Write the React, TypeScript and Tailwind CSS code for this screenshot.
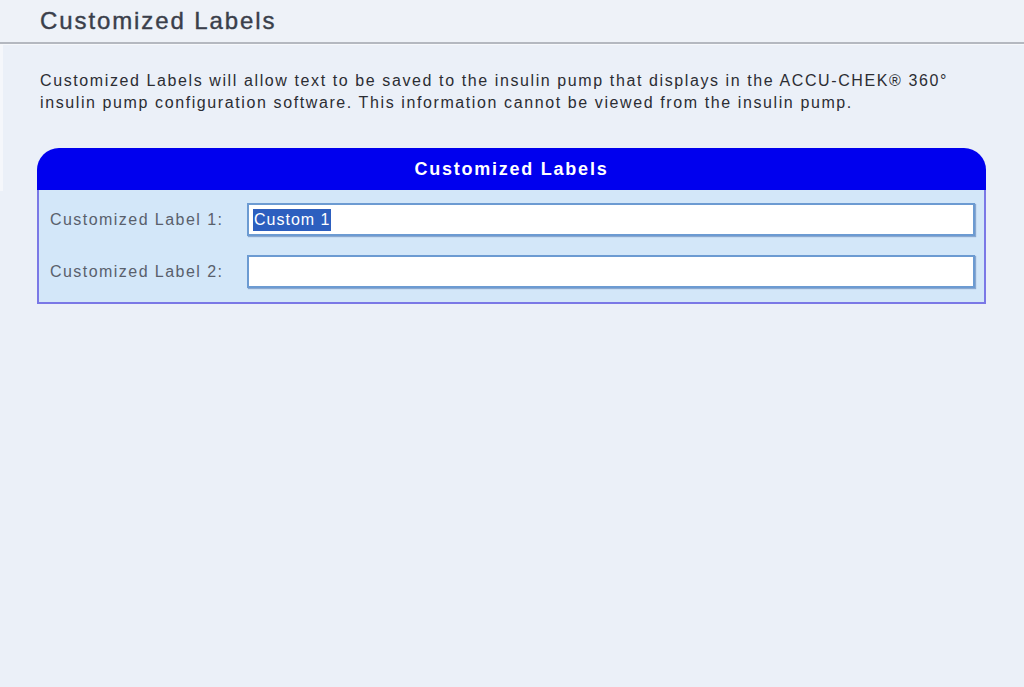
import React from "react";

export default function App() {
  return (
    <div className="w-[1024px] h-[687px] bg-[#ebf0f8] flex flex-col overflow-hidden" style={{ fontFamily: '"Liberation Sans", Arial, sans-serif' }}>
      <div className="h-[42px] bg-[#eef2f8] pl-[40px] flex items-center">
        <h1 className="text-[24px] leading-none tracking-[1.9px] text-[#3a3f4b] [-webkit-text-stroke:0.4px_#3a3f4b]">Customized Labels</h1>
      </div>
      <div className="h-[2px] bg-[#b4b8c0]" />
      <div className="h-[1px] bg-[#f6f8fb]" />
      <div className="flex flex-1">
        <div className="w-[3px] h-[146px] bg-[#f5f7fb]" />
        <div className="flex-1 flex flex-col">
          <p className="mt-[25px] ml-[37px] text-[16px] leading-[22px] tracking-[1.6px] text-[#2b2d33]">
            Customized Labels will allow text to be saved to the insulin pump that displays in the ACCU-CHEK® 360°
            <br />
            insulin pump configuration software. This information cannot be viewed from the insulin pump.
          </p>
          <div className="mt-[34px] ml-[34px] w-[949px] flex flex-col">
            <div className="h-[42px] bg-[#0000ee] rounded-t-[22px] flex items-center justify-center">
              <span className="text-white font-bold text-[18px] tracking-[1.75px] pt-[1px]">Customized Labels</span>
            </div>
            <div className="bg-[#d3e7f9] border-2 border-t-0 border-[#7a78e6] flex flex-col gap-[19px] pt-[13px] pb-[14px] pl-[11px] pr-[9px]">
              <div className="flex items-center">
                <label className="w-[197px] text-[16px] tracking-[1.45px] text-[#59606c]">Customized Label 1:</label>
                <div className="flex-1 h-[33px] bg-white border-2 border-[#6c9bd2] shadow-[1px_1px_1px_#8aa8d0] flex items-center pl-[4px]">
                  <span className="bg-[#2d5fbf] text-white text-[16px] leading-[22px] tracking-[1px] px-[1px]">Custom 1</span>
                </div>
              </div>
              <div className="flex items-center">
                <label className="w-[197px] text-[16px] tracking-[1.45px] text-[#59606c]">Customized Label 2:</label>
                <div className="flex-1 h-[33px] bg-white border-2 border-[#6c9bd2] shadow-[1px_1px_1px_#8aa8d0]" />
              </div>
            </div>
          </div>
        </div>
      </div>
    </div>
  );
}
